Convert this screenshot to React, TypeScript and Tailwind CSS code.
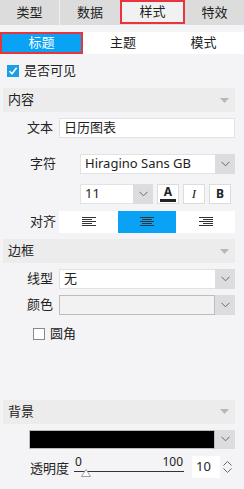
import React from "react";

const Chevron = () => (
  <svg width="9" height="6" viewBox="0 0 9 6" fill="none">
    <path d="M0.5 0.8 L4.5 4.8 L8.5 0.8" stroke="#666" strokeWidth="1" />
  </svg>
);

const Tri = () => (
  <svg width="9" height="5" viewBox="0 0 9 5">
    <path d="M0 0 H9 L4.5 5 Z" fill="#b8b8b8" />
  </svg>
);

const AlignIcon = ({ mode }: { mode: "l" | "c" | "r" }) => {
  const rows = [14, 10, 14, 10, 14];
  return (
    <svg width="14" height="10" viewBox="0 0 14 10" shapeRendering="crispEdges">
      {rows.map((w, i) => {
        const x = mode === "l" ? 0 : mode === "c" ? (14 - w) / 2 : 14 - w;
        return <rect key={i} x={x} y={i * 2} width={w} height="1" fill="#333" />;
      })}
    </svg>
  );
};

const SectionHeader = ({ title }: { title: string }) => (
  <div className="ml-[3px] mr-[9px] h-[24px] bg-[#ececec] flex items-center justify-between pl-[5px] pr-[6px]">
    <span className="text-[13px] text-[#222]">{title}</span>
    <Tri />
  </div>
);

const Select = ({ text, w }: { text: string; w: string }) => (
  <div className={`${w} h-[20px] flex bg-white`}>
    <div className="flex-1 flex items-center pl-[4px] text-[13px] text-[#222] border border-[#e2e2e2] border-r-0">{text}</div>
    <div className="w-[20px] bg-[#dcdcde] flex items-center justify-center">
      <Chevron />
    </div>
  </div>
);

export default function App() {
  return (
    <div
      className="w-[244px] h-[489px] bg-[#f4f4f6] text-[#222] overflow-hidden"
      style={{ fontFamily: '"Noto Sans", "Noto Sans CJK SC", sans-serif' }}
    >
      {/* top tabs */}
      <div className="h-[25px] flex bg-[#dcdcdc] text-[13px] text-[#222]">
        <div className="w-[60px] flex items-center justify-center border-r border-[#f0f0f0]">类型</div>
        <div className="w-[60px] flex items-center justify-center">数据</div>
        <div className="w-[65px] h-[24px] flex items-center justify-center bg-[#f1f1f1] border-2 border-[#e8343a]">样式</div>
        <div className="flex-1 flex items-center justify-center">特效</div>
      </div>
      {/* sub tabs */}
      <div className="mt-[7px] h-[22px] flex bg-white text-[13px]">
        <div className="w-[83px] flex items-center justify-center bg-[#0aa2f5] text-white border-2 border-[#e8343a]">标题</div>
        <div className="w-[80px] flex items-center justify-center">主题</div>
        <div className="flex-1 flex items-center justify-center">模式</div>
      </div>
      {/* visible checkbox */}
      <div className="mt-[10px] h-[14px] flex items-center pl-[7px] gap-[5px] text-[13px]">
        <div className="w-[12px] h-[12px] bg-[#1a9ee8] flex items-center justify-center">
          <svg width="10" height="10" viewBox="0 0 10 10">
            <path d="M1.5 5.2 L4 7.8 L8.6 1.8" stroke="white" strokeWidth="1.6" fill="none" />
          </svg>
        </div>
        <span>是否可见</span>
      </div>

      <div className="mt-[10px]">
        <SectionHeader title="内容" />
      </div>

      {/* text row */}
      <div className="mt-[6px] flex items-center">
        <span className="w-[59px] pr-[6px] text-right text-[13px]">文本</span>
        <div className="w-[176px] h-[20px] bg-white border border-[#e2e2e2] flex items-center pl-[4px] text-[13px]">日历图表</div>
      </div>

      {/* font row */}
      <div className="mt-[16px] flex items-center">
        <span className="w-[80px] pl-[30px] text-[13px]">字符</span>
        <Select text="Hiragino Sans GB" w="w-[155px]" />
      </div>

      <div className="mt-[10px] flex items-center pl-[80px] gap-[4px]">
        <Select text="11" w="w-[73px]" />
        <div className="w-[22px] h-[20px] bg-white border border-[#dcdcdc] flex flex-col items-center justify-center">
          <span className="text-[12px] font-bold leading-[12px]">A</span>
          <div className="w-[16px] h-[3px] bg-[#222] mt-[1px]" />
        </div>
        <div className="w-[22px] h-[20px] bg-white border border-[#dcdcdc] flex items-center justify-center">
          <span className="text-[13px] italic" style={{ fontFamily: '"Liberation Serif", serif' }}>I</span>
        </div>
        <div className="w-[22px] h-[20px] bg-white border border-[#dcdcdc] flex items-center justify-center">
          <span className="text-[12px] font-bold">B</span>
        </div>
      </div>

      {/* align */}
      <div className="mt-[7px] flex items-center">
        <span className="w-[59px] pl-[30px] text-[13px]">对齐</span>
        <div className="w-[176px] h-[22px] flex bg-white">
          <div className="w-[59px] flex items-center justify-center"><AlignIcon mode="l" /></div>
          <div className="w-[58px] flex items-center justify-center bg-[#0aa2f5]"><AlignIcon mode="c" /></div>
          <div className="flex-1 flex items-center justify-center"><AlignIcon mode="r" /></div>
        </div>
      </div>

      <div className="mt-[6px]">
        <SectionHeader title="边框" />
      </div>

      <div className="mt-[6px] flex items-center">
        <span className="w-[59px] pr-[6px] text-right text-[13px]">线型</span>
        <Select text="无" w="w-[176px]" />
      </div>
      <div className="mt-[6px] flex items-center">
        <span className="w-[59px] pr-[6px] text-right text-[13px]">颜色</span>
        <div className="w-[176px] h-[20px] flex">
          <div className="flex-1 bg-[#f2f2f2] border border-[#bdbdbd]" />
          <div className="w-[20px] bg-[#dcdcde] flex items-center justify-center"><Chevron /></div>
        </div>
      </div>
      <div className="mt-[9px] flex items-center pl-[33px] gap-[5px] text-[13px]">
        <div className="w-[12px] h-[12px] bg-white border border-[#888]" />
        <span>圆角</span>
      </div>

      <div className="mt-[56px]">
        <SectionHeader title="背景" />
      </div>

      <div className="mt-[6px] flex items-center pl-[29px]">
        <div className="w-[206px] h-[19px] flex">
          <div className="flex-1 bg-black border border-[#bbb]" />
          <div className="w-[20px] bg-[#dcdcde] flex items-center justify-center"><Chevron /></div>
        </div>
      </div>

      <div className="mt-[6px] flex items-center">
        <span className="w-[74px] pl-[30px] text-[13px] pt-[4px]">透明度</span>
        <div className="relative w-[110px] h-[24px]">
          <span className="absolute left-[1px] top-[-2px] text-[12px]">0</span>
          <span className="absolute right-[1px] top-[-2px] text-[12px]">100</span>
          <div className="absolute left-0 right-0 top-[16px] h-px bg-[#333]" />
          <svg className="absolute left-[7px] top-[14px]" width="10" height="8" viewBox="0 0 10 8">
            <path d="M5 0.5 L9.5 7.5 H0.5 Z" fill="white" stroke="#888" strokeWidth="0.8" />
          </svg>
        </div>
        <div className="ml-[8px] w-[43px] h-[22px] flex">
          <div className="w-[28px] bg-white flex items-center pl-[4px] text-[13px]">10</div>
          <div className="flex-1 flex flex-col items-center justify-center gap-[2px]">
            <svg width="9" height="5" viewBox="0 0 9 5"><path d="M0.5 4.5 L4.5 0.5 L8.5 4.5" stroke="#666" fill="none" /></svg>
            <svg width="9" height="5" viewBox="0 0 9 5"><path d="M0.5 0.5 L4.5 4.5 L8.5 0.5" stroke="#666" fill="none" /></svg>
          </div>
        </div>
      </div>
    </div>
  );
}
